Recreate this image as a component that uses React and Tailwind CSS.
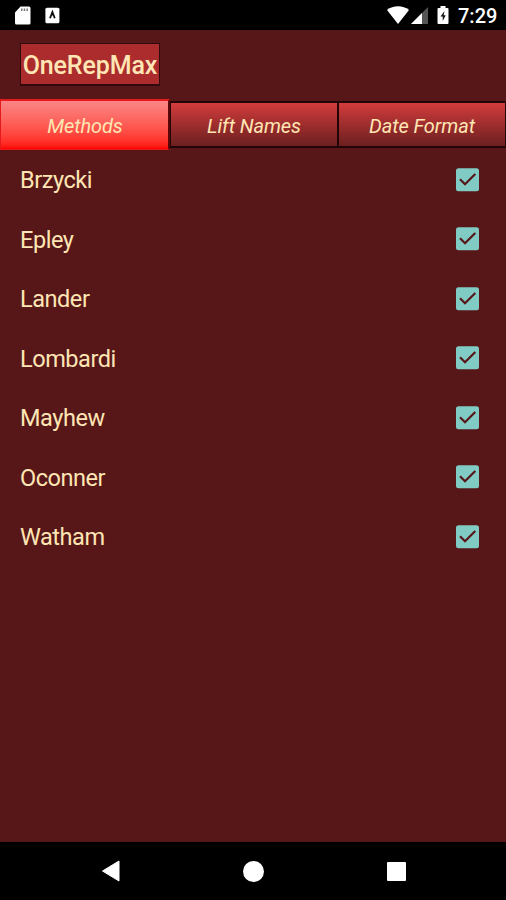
const METHODS = ['Brzycki', 'Epley', 'Lander', 'Lombardi', 'Mayhew', 'Oconner', 'Watham'];

function StatusBar() {
  return (
    <div className="flex h-[30px] shrink-0 items-center bg-black text-white">
      <svg className="ml-[15px] h-5 w-4" viewBox="0 0 16 20">
        <path d="M5.5 1.500H14a1.500 1.500 0 0 1 1.500 1.500v15a1.500 1.500 0 0 1-1.500 1.500H1.500A1.500 1.500 0 0 1 0 18V7.500Z" fill="#fff" />
        <path d="M6 3.500h1.500v2.500H6zM8.700 3.500h1.500v2.500H8.700zM11.400 3.500h1.500v2.500h-1.500z" fill="#777" />
      </svg>
      <svg className="ml-[14px] h-[17px] w-[15px]" viewBox="0 0 15 17">
        <rect x="0.400" y="0.800" width="14" height="15.500" rx="1.500" fill="#fff" />
        <path d="M5 11.200 7.400 5 9.800 11.200M6.500 8 7.400 7 8.500 8" fill="none" stroke="#111" strokeWidth="1.800" />
      </svg>
      <svg className="ml-auto h-5 w-[22px]" viewBox="0 0 22 20">
        <path d="M0 5C6 0 16 0 22 5L11 19Z" fill="#fff" />
      </svg>
      <svg className="ml-[2px] h-5 w-[18px]" viewBox="0 0 18 20">
        <path d="M17 2V19H0Z" fill="#555" />
        <path d="M11 8V19H0Z" fill="#fff" />
      </svg>
      <svg className="ml-[8px] h-5 w-[12px]" viewBox="0 0 12 20">
        <path d="M3.500 1h5v2H10.500a1 1 0 0 1 1 1v14a1 1 0 0 1-1 1h-9a1 1 0 0 1-1-1V4a1 1 0 0 1 1-1h2Z" fill="#fff" />
        <path d="M7.500 6 3.500 11.500h2.200V16L8.700 10.200H6.600Z" fill="#111" />
      </svg>
      <span className="mt-[2px] mr-[9px] ml-[9px] w-[39px] text-[20px] leading-5 font-medium whitespace-nowrap">7:29</span>
    </div>
  );
}

function Checkbox() {
  return (
    <svg className="mr-[27px] h-6 w-[23px]" viewBox="0 0 23 24">
      <rect x="0" y="0.300" width="23" height="23" rx="2.500" fill="#80cbc4" />
      <path d="M4 11.300 9 16.300 19.300 6" fill="none" stroke="#571719" strokeWidth="2.200" />
    </svg>
  );
}

function Tab({ children }) {
  return (
    <button className="mt-[2px] flex h-[47px] flex-1 items-center justify-center border-2 border-r-1 border-l-1 border-[#240507] bg-linear-to-b from-[#d33c3c] to-[#6d1f20] pt-[3px] text-[20px] tracking-[-0.1px] italic">
      <span>{children}</span>
    </button>
  );
}

export default function App() {
  return (
    <div className="flex h-[900px] w-[506px] flex-col overflow-hidden bg-[#571719] font-['Roboto',sans-serif] text-[#ffe6b4]">
      <StatusBar />
      <header className="flex h-[69px] shrink-0 items-start pt-[13px] pl-5">
        <h1 className="flex h-[43px] w-[140px] items-center justify-center border border-b-2 border-[#300a0c] bg-[#ac2c2e] pt-[4px] text-[25px] font-medium tracking-[-0.1px] whitespace-nowrap">
          OneRepMax
        </h1>
      </header>
      <nav className="flex h-[51px] shrink-0 items-start">
        <button className="flex h-[51px] w-[170px] items-center justify-center border border-t-2 border-r-2 border-[#e51a1c] border-r-[#5b0608] bg-linear-to-b from-[#fa8585] to-[#ff0000] pt-[2px] pl-px text-[20px] tracking-[-0.1px] italic">
          Methods
        </button>
        <Tab>Lift Names</Tab>
        <Tab>Date Format</Tab>
      </nav>
      <ul className="flex-1">
        {METHODS.map((name) => (
          <li key={name} className="flex h-[59.5px] items-center justify-between pl-5 text-[23.5px] tracking-[-0.45px]">
            <span className="pt-[2px]">{name}</span>
            <Checkbox />
          </li>
        ))}
      </ul>
      <footer className="flex h-[58px] shrink-0 items-center bg-black">
        <svg className="ml-[102px] h-[22px] w-[18px]" viewBox="0 0 18 22">
          <path d="M17 1v20L0.500 11Z" fill="#fff" stroke="#fff" strokeLinejoin="round" />
        </svg>
        <div className="ml-[123px] size-[21px] rounded-full bg-white" />
        <div className="ml-[123px] size-[19px] rounded-[1px] bg-white" />
      </footer>
    </div>
  );
}
